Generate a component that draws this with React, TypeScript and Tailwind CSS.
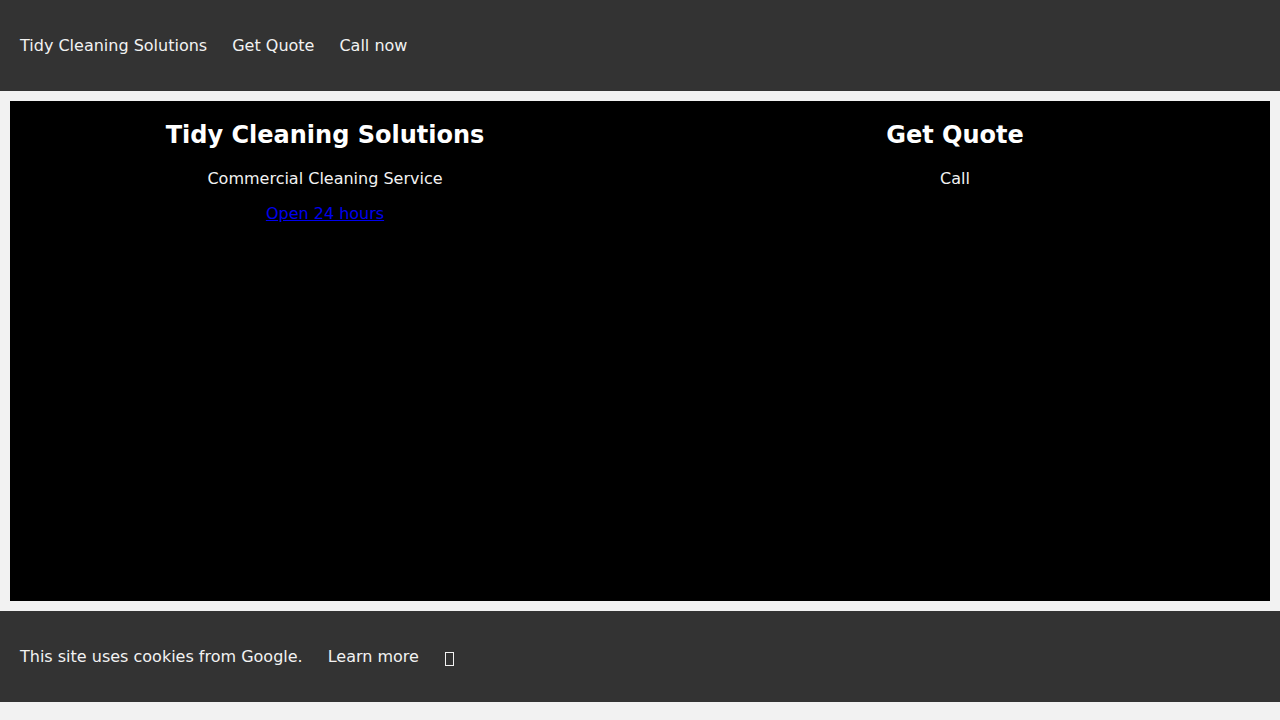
export default function App() {
  return (
    <div className="min-h-[720px] bg-[#f2f2f2] pb-[18px] font-['DejaVu_Sans',sans-serif] text-base text-[#f2f2f2]">
      <header className="flex h-[91px] items-center gap-[25px] bg-[#333333] px-5">
        <a className="leading-[19px]">Tidy Cleaning Solutions</a>
        <a className="leading-[19px]">Get Quote</a>
        <a className="leading-[19px]">Call now</a>
      </header>

      <main className="m-[10px] grid h-[500px] grid-cols-2 bg-black">
        <section className="text-center">
          <h2 className="mt-5 mb-5 text-2xl leading-[28px] font-bold text-white">Tidy Cleaning Solutions</h2>
          <p className="leading-[19px]">Commercial Cleaning Service</p>
          <p className="mt-4 leading-[19px]">
            <a href="#" className="text-[#0000ee] underline">Open 24 hours</a>
          </p>
        </section>
        <section className="text-center">
          <h2 className="mt-5 mb-5 text-2xl leading-[28px] font-bold text-white">Get Quote</h2>
          <p className="leading-[19px]">Call</p>
        </section>
      </main>

      <footer className="flex h-[91px] items-center gap-[25px] bg-[#333333] px-5">
        <span className="leading-[19px]">This site uses cookies from Google.</span>
        <a className="leading-[19px]">Learn more</a>
        <span className="mt-[4px] ml-px inline-block h-[14px] w-[9px] border border-[#f2f2f2]" />
      </footer>
    </div>
  );
}
